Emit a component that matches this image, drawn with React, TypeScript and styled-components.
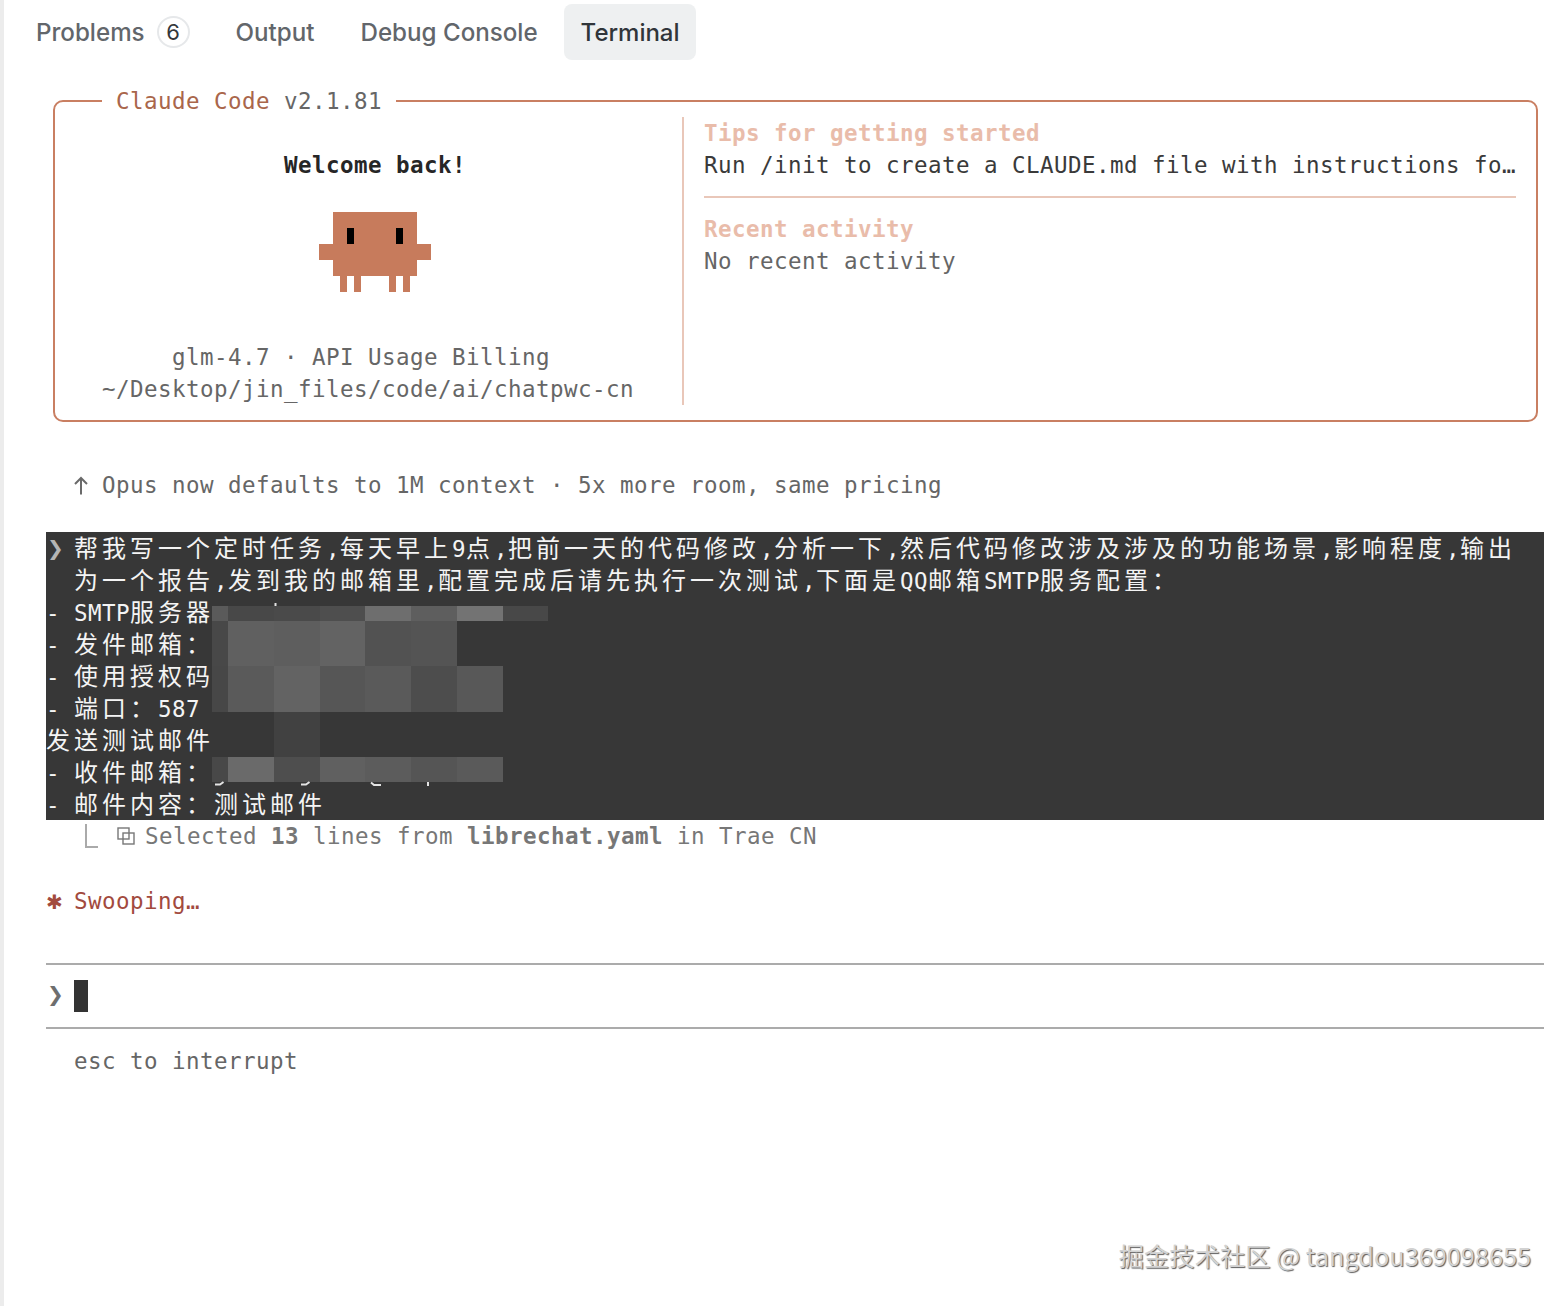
import React from "react"
import styled, { createGlobalStyle } from "styled-components"

const CELL = 14
const MONO = `"DejaVu Sans Mono", "Liberation Mono", monospace`
const CJK = `"Noto Sans CJK SC", "DejaVu Sans Mono", monospace`

const GlobalStyle = createGlobalStyle`
	html, body {
		margin: 0;
		padding: 0;
		background: #fff;
	}
`

const Page = styled.div`
	position: relative;
	box-sizing: border-box;
	min-height: 1306px;
	overflow: hidden;
	border-left: 4px solid #ececec;
	background: #fff;
`

const TabBar = styled.div`
	display: flex;
	align-items: center;
	gap: 12px;
	height: 56px;
	padding: 4px 0 0 15px;
`

const Tab = styled.div<{ $active?: boolean }>`
	display: flex;
	align-items: center;
	gap: 12px;
	height: 56px;
	padding: ${(p) => (p.$active ? "0 16px 0 17px" : "0 17px")};
	margin-left: ${(p) => (p.$active ? "-3px" : "0")};
	border-radius: 8px;
	font-family: Inter, "Liberation Sans", sans-serif;
	font-size: ${(p) => (p.$active ? "24px" : "24.15px")};
	font-weight: 500;
	color: ${(p) => (p.$active ? "#30353a" : "#62666b")};
	background: ${(p) => (p.$active ? "#eef0f1" : "transparent")};
`

const Badge = styled.span`
	display: flex;
	align-items: center;
	justify-content: center;
	box-sizing: border-box;
	width: 33px;
	height: 32px;
	border: 2px solid #e6e8ea;
	border-radius: 50%;
	font-size: 22px;
	font-weight: 400;
	color: #33373b;
`

const Terminal = styled.div`
	margin: 25px 20px 0 42px;
	font-family: ${MONO};
	font-size: 22.5px;
	letter-spacing: 0.455px;
	color: #3a3a3a;
`

const Row = styled.div<{ $indent?: number; $color?: string; $bold?: boolean }>`
	height: 32px;
	line-height: 32px;
	white-space: pre;
	padding-left: ${(p) => (p.$indent || 0) * CELL}px;
	color: ${(p) => p.$color || "inherit"};
	font-weight: ${(p) => (p.$bold ? 700 : 400)};
`

const Frame = styled.fieldset`
	display: grid;
	grid-template-columns: 627px 1fr;
	box-sizing: border-box;
	height: 337px;
	margin: 0 0 0 7px;
	padding: 0 20px 15px 0;
	width: 1485px;
	border: 2px solid #c97f62;
	border-radius: 10px;
`

const Legend = styled.legend`
	height: 32px;
	line-height: 32px;
	margin-left: 47px;
	padding: 0 14px;
	color: #666;
	white-space: pre;
`

const Brand = styled.span`
	color: #a9664b;
`

const LeftColumn = styled.div`
	padding-left: 47px;
`

const MascotSlot = styled.div`
	height: 80px;
	margin: 31px 0 49px 217px;
`

const RightColumn = styled.div`
	border-left: 2px solid #e9c7b9;
	padding-left: 20px;
`

const TipRule = styled.div`
	height: 2px;
	margin: 15px 0 15px;
	background: #e9c7b9;
`

const Notice = styled.div`
	margin-top: 47px;
	color: #666;
`

const UpArrow = styled.svg`
	margin-right: 14px;
	vertical-align: -2px;
`

const Prompt = styled.div`
	position: relative;
	box-sizing: border-box;
	height: 288px;
	margin-top: 31px;
	padding-top: 1px;
	background: #373737;
	color: #f4f4f4;
`

const Mosaic = styled.svg`
	position: absolute;
	left: 166px;
	top: 68px;
`

const Chevron = styled.span<{ $color: string }>`
	display: inline-block;
	width: ${CELL * 2}px;
	padding-left: 1px;
	box-sizing: border-box;
	font-family: "DejaVu Sans", sans-serif;
	font-size: 20px;
	font-weight: 700;
	letter-spacing: 0;
	line-height: 1;
	color: ${(p) => p.$color};
	transform: translateY(-2px);
`

const Han = styled.span`
	font-family: ${CJK};
	font-size: 24px;
	line-height: 1;
	letter-spacing: 4px;
`

const SelectionRow = styled.div`
	display: flex;
	align-items: center;
	height: 32px;
	line-height: 32px;
	white-space: pre;
	color: #777;
`

const TreeElbow = styled.span`
	box-sizing: border-box;
	width: 13px;
	height: 24px;
	margin: 0 19px 0 39px;
	border-left: 2px solid #aaa;
	border-bottom: 2px solid #aaa;
`

const SelectionIcon = styled.svg`
	margin-right: 10px;
`

const Status = styled.div`
	height: 32px;
	line-height: 32px;
	margin-top: 33px;
	white-space: pre;
	color: #a24a3e;
`

const Star = styled.span`
	display: inline-block;
	width: ${CELL * 2}px;
	font-family: "DejaVu Sans", sans-serif;
	font-size: 20px;
	letter-spacing: 0;
	font-weight: 700;
`

const InputBox = styled.div`
	display: flex;
	align-items: center;
	box-sizing: border-box;
	height: 66px;
	margin-top: 46px;
	border-top: 2px solid #ababab;
	border-bottom: 2px solid #ababab;
`

const Cursor = styled.span`
	width: ${CELL}px;
	height: 32px;
	background: #333;
`

const Hint = styled(Row)`
	margin-top: 16px;
	color: #666;
`

const Watermark = styled.div`
	position: absolute;
	right: 33px;
	top: 1237px;
	font-family: "Noto Sans CJK SC", sans-serif;
	font-size: 25.3px;
	line-height: 36px;
	white-space: pre;
	color: #d2d2d2;
	text-shadow: 1px 1px 1px #5c5c5c;
`

// lays Han runs out on the two-cell grid the terminal uses
function Cells({ text }: { text: string }) {
	const parts = text.split(/([\u3000-\u9fff\uff00-\uffef]+)/)
	return (
		<>
			{parts.map((part, index) =>
				index % 2 === 1 ? <Han key={index}>{part}</Han> : part
			)}
		</>
	)
}

function Mascot() {
	const colour = "#c77b5c"
	return (
		<svg width="112" height="80" viewBox="0 0 112 80">
			<rect x="14" y="0" width="84" height="64" fill={colour} />
			<rect x="0" y="32" width="112" height="16" fill={colour} />
			<rect x="21" y="64" width="7" height="16" fill={colour} />
			<rect x="35" y="64" width="7" height="16" fill={colour} />
			<rect x="70" y="64" width="7" height="16" fill={colour} />
			<rect x="84" y="64" width="7" height="16" fill={colour} />
			<rect x="28" y="16" width="7" height="16" fill="#000" />
			<rect x="77" y="16" width="7" height="16" fill="#000" />
		</svg>
	)
}

const columns = [212, 228, 274, 320, 365, 411, 457, 503, 548]

const mosaicRows: { top: number; bottom: number; shades: (string | null)[] }[] = [
	{ top: 606, bottom: 621, shades: ["#5a5a5a", "#484848", "#4a4a4a", "#4e4e4e", "#6e6e6e", "#5e5e5e", "#737373", "#484848"] },
	{ top: 621, bottom: 666, shades: ["#484848", "#606060", "#5e5e5e", "#636363", "#525252", "#545454", null, null] },
	{ top: 666, bottom: 712, shades: ["#474747", "#5a5a5a", "#636363", "#565656", "#5a5a5a", "#4d4d4d", "#585858", null] },
	{ top: 712, bottom: 757, shades: [null, null, "#414141", null, null, null, null, null] },
	{ top: 757, bottom: 782, shades: ["#484848", "#6a6a6a", "#4e4e4e", "#606060", "#5c5c5c", "#555555", "#5a5a5a", null] },
]

function BlurredSecrets() {
	return (
		<Mosaic width="340" height="190" viewBox="212 600 340 190">
			{mosaicRows.map((row) =>
				row.shades.map((shade, index) =>
					shade ? (
						<rect
							key={`${row.top}-${index}`}
							x={columns[index]}
							y={row.top}
							width={columns[index + 1] - columns[index]}
							height={row.bottom - row.top}
							fill={shade}
						/>
					) : null
				)
			)}
			{/* bits of the hidden text that stick out of the mosaic */}
			<g fill="none" stroke="#e4e4e4" strokeWidth="2">
				<path d="M275.5 603v3" />
				<path d="M215 784.5h5l3.5-2.5" />
				<path d="M301 784.5h5l3.5-2.5" />
				<path d="M371 782.5l3 2.5h7" />
				<path d="M428 782v4" />
			</g>
		</Mosaic>
	)
}

function App() {
	return (
		<Page>
			<GlobalStyle />
			<TabBar>
				<Tab>
					Problems <Badge>6</Badge>
				</Tab>
				<Tab>Output</Tab>
				<Tab>Debug Console</Tab>
				<Tab $active>Terminal</Tab>
			</TabBar>

			<Terminal>
				<Frame>
					<Legend>
						<Brand>Claude Code</Brand> v2.1.81
					</Legend>
					<LeftColumn>
						<Row />
						<Row $indent={13} $bold $color="#262626">
							Welcome back!
						</Row>
						<MascotSlot>
							<Mascot />
						</MascotSlot>
						<Row $indent={5} $color="#666">
							glm-4.7 · API Usage Billing
						</Row>
						<Row $color="#666">~/Desktop/jin_files/code/ai/chatpwc-cn</Row>
					</LeftColumn>
					<RightColumn>
						<Row $bold $color="#e9bcaa">
							Tips for getting started
						</Row>
						<Row>Run /init to create a CLAUDE.md file with instructions fo…</Row>
						<TipRule />
						<Row $bold $color="#e9bcaa">
							Recent activity
						</Row>
						<Row $color="#666">No recent activity</Row>
					</RightColumn>
				</Frame>

				<Notice>
					<Row $indent={2}>
						<UpArrow width="14" height="19" viewBox="0 0 14 19" fill="none" stroke="#6a6a6a" strokeWidth="2">
							<path d="M7 18.5V2" />
							<path d="M1 8l6-6 6 6" />
						</UpArrow>
						Opus now defaults to 1M context · 5x more room, same pricing
					</Row>
				</Notice>

				<Prompt>
					<Row>
						<Chevron $color="#b5b5b5">❯</Chevron>
						<Cells text="帮我写一个定时任务,每天早上9点,把前一天的代码修改,分析一下,然后代码修改涉及涉及的功能场景,影响程度,输出" />
					</Row>
					<Row $indent={2}>
						<Cells text="为一个报告,发到我的邮箱里,配置完成后请先执行一次测试,下面是QQ邮箱SMTP服务配置：" />
					</Row>
					<Row>
						<Cells text="- SMTP服务器" />
					</Row>
					<Row>
						<Cells text="- 发件邮箱：" />
					</Row>
					<Row>
						<Cells text="- 使用授权码" />
					</Row>
					<Row>
						<Cells text="- 端口：587" />
					</Row>
					<Row>
						<Cells text="发送测试邮件" />
					</Row>
					<Row>
						<Cells text="- 收件邮箱：" />
					</Row>
					<Row>
						<Cells text="- 邮件内容：测试邮件" />
					</Row>
					<BlurredSecrets />
				</Prompt>

				<SelectionRow>
					<TreeElbow />
					<SelectionIcon width="18" height="18" viewBox="0 0 18 18" fill="none" stroke="#777" strokeWidth="1.4">
						<rect x="1" y="1" width="11" height="11" />
						<rect x="6" y="6" width="11" height="11" />
					</SelectionIcon>
					Selected <b>13</b> lines from <b>librechat.yaml</b> in Trae CN
				</SelectionRow>

				<Status>
					<Star>✱</Star>Swooping…
				</Status>

				<InputBox>
					<Chevron $color="#6e6e6e">❯</Chevron>
					<Cursor />
				</InputBox>

				<Hint $indent={2}>esc to interrupt</Hint>
			</Terminal>

			<Watermark>掘金技术社区 @ tangdou369098655</Watermark>
		</Page>
	)
}

export default App
